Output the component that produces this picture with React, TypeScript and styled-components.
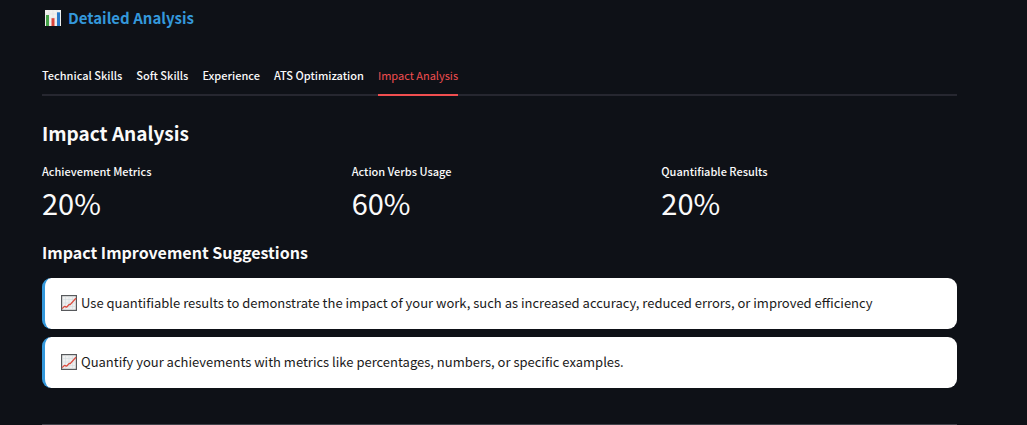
import React, { useState } from "react";
import styled, { createGlobalStyle } from "styled-components";

const GlobalStyle = createGlobalStyle`
  *, *::before, *::after { box-sizing: border-box; }
  body {
    margin: 0;
    background: #0e1117;
    color: #fafafa;
    font-family: "Noto Sans CJK SC", "Noto Sans", sans-serif;
    font-size: 13px;
  }
`;

const Page = styled.main`
  padding: 4px 70px 0 42px;
`;

const SectionTitle = styled.h2`
  display: flex;
  align-items: center;
  gap: 7px;
  margin: 0;
  padding-left: 3px;
  color: #3498db;
  font-size: 15px;
  font-weight: 700;
  line-height: 28px;
`;

const TabList = styled.div`
  display: flex;
  gap: 14px;
  margin-top: 28px;
  border-bottom: 2px solid #262730;
`;

const Tab = styled.button<{ $active: boolean }>`
  margin: 0 0 -2px;
  padding: 0 0 4px;
  border: 0;
  border-bottom: 2px solid ${(p) => (p.$active ? "#f04e50" : "transparent")};
  background: none;
  color: ${(p) => (p.$active ? "#f04e50" : "#fafafa")};
  font-family: inherit;
  font-size: 11px;
  font-weight: ${(p) => (p.$active ? 400 : 500)};
  line-height: 30px;
  white-space: nowrap;
  cursor: pointer;
`;

const PanelTitle = styled.h3`
  margin: 21px 0 0;
  font-size: 19px;
  font-weight: 700;
  line-height: 32px;
`;

const Metrics = styled.dl`
  display: grid;
  grid-template-columns: repeat(3, 1fr);
  gap: 14px;
  margin: 12px 0 0;
`;

const MetricLabel = styled.dt`
  font-size: 11px;
  font-weight: 500;
  line-height: 20px;
`;

const MetricValue = styled.dd`
  margin: 0;
  font-size: 29px;
  line-height: 42px;
`;

const SuggestionsTitle = styled.h4`
  margin: 16px 0 0;
  font-size: 16px;
  font-weight: 700;
  line-height: 26px;
`;

const Suggestions = styled.ul`
  display: grid;
  gap: 8px;
  margin: 13px 0 0;
  padding: 0;
  list-style: none;
`;

const Suggestion = styled.li`
  display: flex;
  align-items: center;
  gap: 4px;
  padding: 13px 16px 15px;
  border-left: 3px solid #3498db;
  border-radius: 9px;
  background: #fff;
  color: #1a1a1a;
  line-height: 23px;
`;

const Divider = styled.hr`
  height: 1px;
  margin: 36px 0 0;
  border: 0;
  background: #41424a;
`;

const Icon = styled.svg`
  flex: none;
  width: 16px;
  height: 16px;
`;

const BarChartIcon = () => (
  <Icon viewBox="0 0 16 16" aria-hidden="true">
    <rect width="16" height="16" fill="#f1f1ef" />
    <path d="M0 4h16M0 8h16M0 12h16M4 0v16M8 0v16M12 0v16" stroke="#d9dcdc" strokeWidth=".4" />
    <rect x="1" y="5" width="3" height="11" fill="#43a047" />
    <rect x="6.5" y="8.2" width="3" height="7.8" fill="#d8433b" />
    <rect x="12" y="2.3" width="3" height="13.7" fill="#2779c9" />
  </Icon>
);

const TrendIcon = () => (
  <Icon viewBox="0 0 16 16" aria-hidden="true">
    <rect x=".6" y=".6" width="14.8" height="14.8" fill="#f0f0f0" stroke="#57595c" strokeWidth="1.2" />
    <path d="M1 4.5h14M1 8h14M1 11.5h14M4.5 1v14M8 1v14M11.5 1v14" stroke="#cfd8dc" strokeWidth=".5" />
    <path d="M1.2 13.6 3.4 11.4l2.2.8 2.6-2.8 1 .2 5.7-6.4" fill="none" stroke="#dc4a3d" strokeWidth="1.3" strokeLinejoin="round" />
  </Icon>
);

const tabs = ["Technical Skills", "Soft Skills", "Experience", "ATS Optimization", "Impact Analysis"];

const metrics = [
  { label: "Achievement Metrics", value: "20%" },
  { label: "Action Verbs Usage", value: "60%" },
  { label: "Quantifiable Results", value: "20%" },
];

const suggestions = [
  "Use quantifiable results to demonstrate the impact of your work, such as increased accuracy, reduced errors, or improved efficiency",
  "Quantify your achievements with metrics like percentages, numbers, or specific examples.",
];

export default function App() {
  const [active, setActive] = useState("Impact Analysis");
  return (
    <Page>
      <GlobalStyle />
      <SectionTitle>
        <BarChartIcon />
        Detailed Analysis
      </SectionTitle>
      <TabList role="tablist">
        {tabs.map((tab) => (
          <Tab
            key={tab}
            type="button"
            role="tab"
            aria-selected={tab === active}
            $active={tab === active}
            onClick={() => setActive(tab)}
          >
            {tab}
          </Tab>
        ))}
      </TabList>
      <section role="tabpanel">
        <PanelTitle>Impact Analysis</PanelTitle>
        <Metrics>
          {metrics.map((m) => (
            <div key={m.label}>
              <MetricLabel>{m.label}</MetricLabel>
              <MetricValue>{m.value}</MetricValue>
            </div>
          ))}
        </Metrics>
        <SuggestionsTitle>Impact Improvement Suggestions</SuggestionsTitle>
        <Suggestions>
          {suggestions.map((text) => (
            <Suggestion key={text}>
              <TrendIcon />
              {text}
            </Suggestion>
          ))}
        </Suggestions>
      </section>
      <Divider />
    </Page>
  );
}
